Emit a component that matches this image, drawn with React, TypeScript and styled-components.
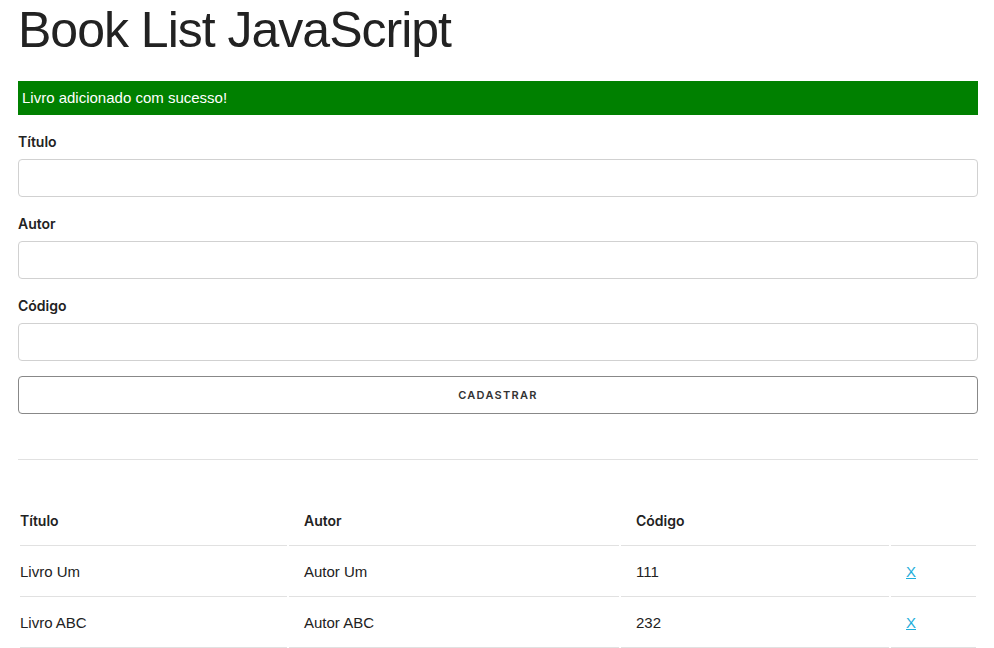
import React from "react";
import styled, { createGlobalStyle } from "styled-components";

const Global = createGlobalStyle`
  html, body { margin: 0; padding: 0; background: #fff; }
  body {
    font-family: "Liberation Sans", Arial, sans-serif;
    font-size: 15px;
    line-height: 1.6;
    color: #222;
  }
  * { box-sizing: border-box; }
`;

const Container = styled.div`
  width: 960px;
  margin-left: 18px;
`;

const Title = styled.h1`
  margin: 0 0 20px;
  font-family: "Liberation Sans", Arial, sans-serif;
  font-size: 50px;
  font-weight: 300;
  line-height: 61px;
  letter-spacing: -1px;
  color: #222;
`;

const Alert = styled.div`
  background: #008000;
  color: #fff;
  font-size: 15px;
  line-height: 18px;
  padding: 8px 4px;
  margin-bottom: 15px;
`;

const Form = styled.form`
  display: flex;
  flex-direction: column;
`;

const Label = styled.label`
  display: block;
  margin-bottom: 5px;
  font-family: "Inter", "Lato", sans-serif;
  font-weight: 600;
  font-size: 14px;
  line-height: 24px;
  color: #222;
`;

const Input = styled.input`
  height: 38px;
  padding: 6px 10px;
  border: 1px solid #d1d1d1;
  border-radius: 4px;
  background: #fff;
  margin: 0 0 15px;
  font-size: 15px;
  width: 100%;
`;

const Button = styled.button`
  height: 38px;
  padding: 0 30px;
  border: 1px solid #888;
  border-radius: 4px;
  background: transparent;
  color: #333;
  font-family: "Inter", "Lato", sans-serif;
  font-size: 11px;
  font-weight: 600;
  letter-spacing: 1.3px;
  text-transform: uppercase;
  width: 100%;
  cursor: pointer;
`;

const Rule = styled.hr`
  border: 0;
  border-top: 1px solid #e1e1e1;
  margin: 45px 0 35px;
`;

const Table = styled.table`
  width: 100%;
  border-collapse: separate;
  border-spacing: 2px;
  table-layout: fixed;
`;

const Th = styled.th<{ $w: number }>`
  width: ${(p) => p.$w}px;
  text-align: left;
  padding: 12px 15px;
  border-bottom: 1px solid #e1e1e1;
  font-family: "Inter", "Lato", sans-serif;
  font-weight: 600;
  font-size: 14px;
  line-height: 24px;
  color: #222;
  &:first-child { padding-left: 0; }
`;

const Td = styled.td`
  text-align: left;
  padding: 12px 15px;
  border-bottom: 1px solid #e1e1e1;
  font-size: 15px;
  line-height: 24px;
  color: #222;
  &:first-child { padding-left: 0; }
`;

const Remove = styled.a`
  color: #1eaedb;
  text-decoration: underline;
  cursor: pointer;
`;

const books = [
  { titulo: "Livro Um", autor: "Autor Um", codigo: "111" },
  { titulo: "Livro ABC", autor: "Autor ABC", codigo: "232" },
];

export default function App() {
  return (
    <>
      <Global />
      <Container>
        <Title>Book List JavaScript</Title>
        <Alert>Livro adicionado com sucesso!</Alert>
        <Form onSubmit={(e) => e.preventDefault()}>
          <Label>Título</Label>
          <Input type="text" />
          <Label>Autor</Label>
          <Input type="text" />
          <Label>Código</Label>
          <Input type="text" />
          <Button type="submit">Cadastrar</Button>
        </Form>
        <Rule />
        <Table>
          <thead>
            <tr>
              <Th $w={267}>Título</Th>
              <Th $w={330}>Autor</Th>
              <Th $w={268}>Código</Th>
              <Th $w={85}></Th>
            </tr>
          </thead>
          <tbody>
            {books.map((b) => (
              <tr key={b.codigo}>
                <Td>{b.titulo}</Td>
                <Td>{b.autor}</Td>
                <Td>{b.codigo}</Td>
                <Td>
                  <Remove href="#">X</Remove>
                </Td>
              </tr>
            ))}
          </tbody>
        </Table>
      </Container>
    </>
  );
}
